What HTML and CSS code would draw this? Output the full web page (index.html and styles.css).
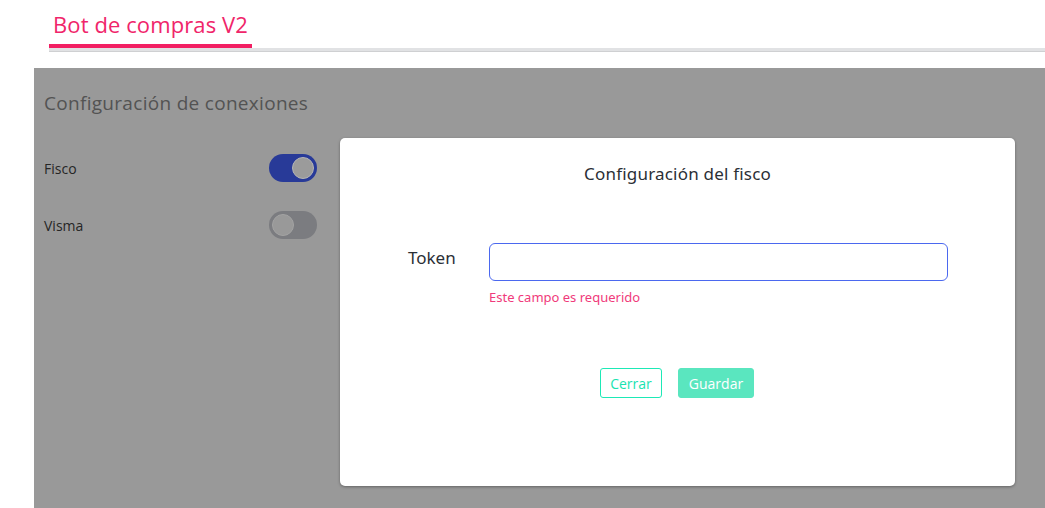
FILE: index.html
```html
<!DOCTYPE html>
<html lang="es">
<head>
<meta charset="utf-8">
<title>Bot de compras V2</title>
<link rel="stylesheet" href="styles.css">
</head>
<body>
  <header class="tabs">
    <div class="tab active">Bot de compras V2</div>
  </header>
  <main class="content">
    <section class="sidebar">
      <h2 class="side-title">Configuración de conexiones</h2>
      <div class="conn-row">
        <span class="conn-name">Fisco</span>
        <span class="toggle on"><span class="knob"></span></span>
      </div>
      <div class="conn-row">
        <span class="conn-name">Visma</span>
        <span class="toggle off"><span class="knob"></span></span>
      </div>
    </section>
    <div class="modal">
      <h3 class="modal-title">Configuración del fisco</h3>
      <div class="field">
        <label class="field-label" for="token">Token</label>
        <div class="field-control">
          <input id="token" class="field-input" type="text">
          <div class="field-error">Este campo es requerido</div>
        </div>
      </div>
      <div class="actions">
        <button class="btn btn-outline">Cerrar</button>
        <button class="btn btn-solid">Guardar</button>
      </div>
    </div>
  </main>
</body>
</html>
```

FILE: styles.css
```css
html, body {
  margin: 0;
  padding: 0;
  background: #ffffff;
  font-family: "Open Sans", "Noto Sans", sans-serif;
  width: 1045px;
  height: 508px;
  overflow: hidden;
}

.tabs {
  margin-left: 49px;
  padding-top: 9px;
  border-bottom: 3px solid #e1e2e4;
  box-shadow: 0 1px 0 #cfd0d2;
  display: flex;
}

.tab {
  font-size: 22px;
  line-height: 30px;
  color: #f0256a;
  padding: 0 0 5px 4px;
  width: 203px;
  box-sizing: border-box;
  white-space: nowrap;
  border-bottom: 4px solid #f21f63;
  letter-spacing: 0.1px;
}

.content {
  margin-top: 17px;
  margin-left: 34px;
  height: 440px;
  background: #999999;
  position: relative;
}

.sidebar {
  width: 283px;
  padding: 22px 0 0 10px;
  box-sizing: border-box;
}

.side-title {
  margin: 0 0 38px 0;
  font-weight: 400;
  font-size: 19px;
  line-height: 26px;
  letter-spacing: 0.3px;
  color: #535353;
}

.conn-row {
  display: flex;
  align-items: center;
  justify-content: space-between;
  height: 28px;
  margin-bottom: 29px;
}

.conn-name {
  font-size: 14px;
  color: #262626;
}

.toggle {
  width: 48px;
  height: 28px;
  border-radius: 14px;
  box-sizing: border-box;
  padding: 3px;
  display: flex;
}

.toggle.on {
  background: #283a98;
  justify-content: flex-end;
}

.toggle.off {
  background: #7b7c80;
  justify-content: flex-start;
}

.knob {
  width: 22px;
  height: 22px;
  border-radius: 50%;
  background: #9b9b9b;
  box-sizing: border-box;
  border: 1px solid #b5b5b5;
}

.toggle.off .knob {
  background: #999999;
  border-color: #a3a3a3;
}

.modal {
  position: absolute;
  left: 306px;
  top: 70px;
  width: 675px;
  height: 348px;
  background: #ffffff;
  border-radius: 5px;
  box-shadow: 0 1px 3px rgba(0, 0, 0, 0.35);
  font-family: "Noto Sans", "Open Sans", sans-serif;
  box-sizing: border-box;
  padding-top: 24px;
}

.modal-title {
  margin: 0;
  text-align: center;
  font-weight: 400;
  font-size: 17px;
  line-height: 24px;
  letter-spacing: 0.2px;
  color: #2b2f36;
}

.field {
  display: flex;
  margin-top: 57px;
  padding-left: 68px;
}

.field-label {
  width: 81px;
  font-size: 17px;
  line-height: 30px;
  color: #2b2f36;
}

.field-control {
  display: flex;
  flex-direction: column;
}

.field-input {
  width: 459px;
  height: 38px;
  box-sizing: border-box;
  border: 1px solid #4b68ef;
  border-radius: 6px;
  outline: none;
  margin: 0;
  font-size: 14px;
}

.field-error {
  margin-top: 7px;
  font-size: 13px;
  line-height: 18px;
  color: #f03a7b;
}

.actions {
  display: flex;
  justify-content: center;
  gap: 16px;
  margin-top: 62px;
  padding-right: 1px;
}

.btn {
  height: 30px;
  box-sizing: border-box;
  border-radius: 3px;
  font-family: "Open Sans", "Noto Sans", sans-serif;
  font-size: 14px;
  padding: 0 6px;
  margin: 0;
  cursor: pointer;
}

.btn-outline {
  width: 62px;
  background: #ffffff;
  border: 1px solid #1de9b6;
  color: #19e3b0;
}

.btn-solid {
  width: 76px;
  background: #5ae6bf;
  border: 1px solid #5ae6bf;
  color: #ffffff;
}
```
